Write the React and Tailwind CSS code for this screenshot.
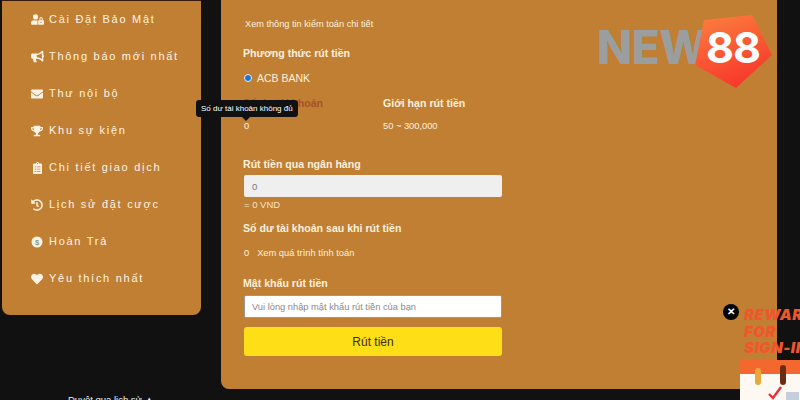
import React from 'react'
import { FaUserLock, FaBullhorn, FaEnvelope, FaTrophy, FaClipboardList, FaHistory, FaHeart } from 'react-icons/fa'

const FONT = "font-['Liberation_Sans',Arial,sans-serif]"

const DollarIcon = ({ className }) => (
  <svg viewBox="0 0 12 12" className={className}>
    <circle cx="6" cy="6" r="5.5" fill="#fdf3e4" />
    <text x="6" y="8.6" textAnchor="middle" fontSize="7.5" fontWeight="700" fill="#7fa08c" fontFamily="Liberation Sans">$</text>
  </svg>
)

const MENU = [
  { label: 'Cài Đặt Bảo Mật', icon: FaUserLock, size: 'w-[13px] h-[13px]' },
  { label: 'Thông báo mới nhất', icon: FaBullhorn, size: 'w-[13px] h-[13px]' },
  { label: 'Thư nội bộ', icon: FaEnvelope, size: 'w-[12px] h-[12px]' },
  { label: 'Khu sự kiện', icon: FaTrophy, size: 'w-[12px] h-[12px]' },
  { label: 'Chi tiết giao dịch', icon: FaClipboardList, size: 'w-[11px] h-[12px]' },
  { label: 'Lịch sử đặt cược', icon: FaHistory, size: 'w-[12px] h-[12px]' },
  { label: 'Hoàn Trả', icon: DollarIcon, size: 'w-[12px] h-[12px]' },
  { label: 'Yêu thích nhất', icon: FaHeart, size: 'w-[12px] h-[12px]' },
]

const Sidebar = () => (
  <div className="w-[199px] h-[315px] shrink-0 bg-[#c17f33] border-t border-[#3a1a10] rounded-b-lg pl-[29px] flex flex-col">
    {MENU.map((item) => {
      const Icon = item.icon
      return (
        <div key={item.label} className="h-[37px] shrink-0 flex items-center gap-[6px] text-[#fdf3e4]">
          <span className="w-[12px] flex justify-center shrink-0">
            <Icon className={`${item.size} shrink-0`} />
          </span>
          <span className="text-[11px] tracking-[1.72px] leading-none whitespace-nowrap">{item.label}</span>
        </div>
      )
    })}
  </div>
)

const Heading = ({ children, className = '' }) => (
  <div className={`text-[10.6px] font-bold leading-[14px] text-[#fdf0dc] whitespace-nowrap ${className}`}>{children}</div>
)

const Main = () => (
  <div className="relative w-[556px] h-[389px] shrink-0 ml-[20px] bg-[#c17f33] rounded-b-lg pl-[22px] text-[#fdf0dc] flex flex-col">
    <div className="mt-[18px] ml-[2px] text-[9.2px] leading-[12px] whitespace-nowrap">Xem thông tin kiểm toán chi tiết</div>
    <Heading className="mt-[16px]">Phương thức rút tiền</Heading>
    <label className="mt-[11px] ml-[1px] flex items-center gap-[5px] text-[10.5px] leading-[14px]">
      <span className="w-[8px] h-[8px] rounded-full bg-[#1a73d9] border border-[#e8eef6]" />
      ACB BANK
    </label>
    <div className="mt-[11px] flex">
      <div className="w-[140px]">
        <div className="text-[10.6px] font-bold leading-[14px] text-[#a9502c]">Số dư tài khoản</div>
        <div className="mt-[9px] ml-[1px] text-[9.3px] leading-[14px]">0</div>
      </div>
      <div>
        <Heading>Giới hạn rút tiền</Heading>
        <div className="mt-[9px] text-[9.3px] leading-[14px]">50 ~ 300,000</div>
      </div>
    </div>
    <Heading className="mt-[24px]">Rút tiền qua ngân hàng</Heading>
    <input
      readOnly
      value="0"
      className="mt-[4px] ml-[1px] w-[258px] h-[22px] shrink-0 bg-[#efefef] rounded-[2px] px-[8px] text-[9.5px] text-[#777] outline-none"
    />
    <div className="mt-[2px] ml-[1px] text-[9.5px] leading-[12px] text-[#f6e2c4]">= 0 VND</div>
    <Heading className="mt-[10px]">Số dư tài khoản sau khi rút tiền</Heading>
    <div className="mt-[12px] ml-[1px] flex gap-[8px] text-[9.3px] leading-[12px]">
      <span>0</span>
      <span>Xem quá trình tính toán</span>
    </div>
    <Heading className="mt-[17px]">Mật khẩu rút tiền</Heading>
    <input
      readOnly
      placeholder="Vui lòng nhập mật khẩu rút tiền của bạn"
      className="mt-[5px] ml-[1px] w-[258px] h-[23px] shrink-0 bg-white border border-[#999] rounded-[2px] px-[7px] text-[9.3px] text-[#777] placeholder:text-[#8a8a8a] outline-none"
    />
    <button className="mt-[9px] ml-[1px] w-[258px] h-[29px] shrink-0 bg-[#fede16] rounded-[3px] text-[12px] text-[#3a2c08]">Rút tiền</button>

    {/* logo */}
    <div className="absolute left-[376px] top-[14px] h-[76px] w-[180px]">
      <span className="absolute left-0 top-[8px] text-[46px] font-extrabold leading-[50px] tracking-[-0.5px] text-[#9a9e9e] font-['Inter',sans-serif]">NEW</span>
      <svg viewBox="0 0 78 76" className="absolute left-[98px] top-0 w-[78px] h-[76px]">
        <defs>
          <linearGradient id="logoRed" x1="0.3" y1="0" x2="0.7" y2="1">
            <stop offset="0" stopColor="#fb7a3c" />
            <stop offset="1" stopColor="#f8322a" />
          </linearGradient>
        </defs>
        <polygon points="9,6 57,1 77,41 41,74 0,51" fill="url(#logoRed)" />
      </svg>
      <span className="absolute left-[109px] top-[8px] text-[43px] font-bold leading-[50px] tracking-[-1px] text-white font-['Inter',sans-serif]">88</span>
    </div>
  </div>
)

const Tooltip = () => (
  <div className="absolute left-[196px] top-[100px] h-[17px] bg-[#111] rounded-[3px] px-[5px] text-[8px] leading-[17px] text-white whitespace-nowrap">
    Số dư tài khoản không đủ
    <span className="absolute left-[46px] top-full w-0 h-0 border-x-[4px] border-x-transparent border-t-[4px] border-t-[#111]" />
  </div>
)

const RewardWidget = () => (
  <div className="absolute left-[723px] top-[304px] w-[77px] h-[96px] overflow-hidden">
    <div className="absolute left-0 top-0 w-[16px] h-[16px] rounded-full bg-black text-white flex items-center justify-center text-[10px] leading-none font-bold">✕</div>
    <div className="absolute left-[21px] top-[3px] text-[15px] leading-[16.5px] font-black italic tracking-[0.5px] text-[#f0562c] whitespace-nowrap font-['Inter',sans-serif]">
      REWARD<br />FOR<br />SIGN-IN
    </div>
    <div className="absolute left-[17px] top-[56px] w-[70px] h-[40px] bg-[#fdf8f2]">
      <div className="h-[14px] bg-[#f4682f]" />
      <span className="absolute left-[15px] top-[8px] w-[6px] h-[17px] rounded-full bg-[#e8a83a]" />
      <span className="absolute left-[40px] top-[5px] w-[6px] h-[20px] rounded-full bg-[#6b2c14]" />
      <svg viewBox="0 0 16 14" className="absolute left-[27px] top-[26px] w-[16px] h-[14px]">
        <path d="M2 8 L6 12 L14 1" fill="none" stroke="#e8303a" strokeWidth="2.4" />
      </svg>
      <span className="absolute left-[46px] top-[32px] w-[13px] h-[8px] bg-[#c4cedd]" />
    </div>
  </div>
)

export default function App() {
  return (
    <div className={`relative w-[800px] h-[400px] overflow-hidden bg-[#111111] ${FONT}`}>
      <div className="flex pl-[2px]">
        <div className="flex flex-col">
          <Sidebar />
          <div className="mt-[79px] ml-[66px] text-[9.5px] leading-[12px] text-[#eee] whitespace-nowrap">Duyệt qua lịch sử ▲</div>
        </div>
        <Main />
      </div>
      <Tooltip />
      <RewardWidget />
    </div>
  )
}
